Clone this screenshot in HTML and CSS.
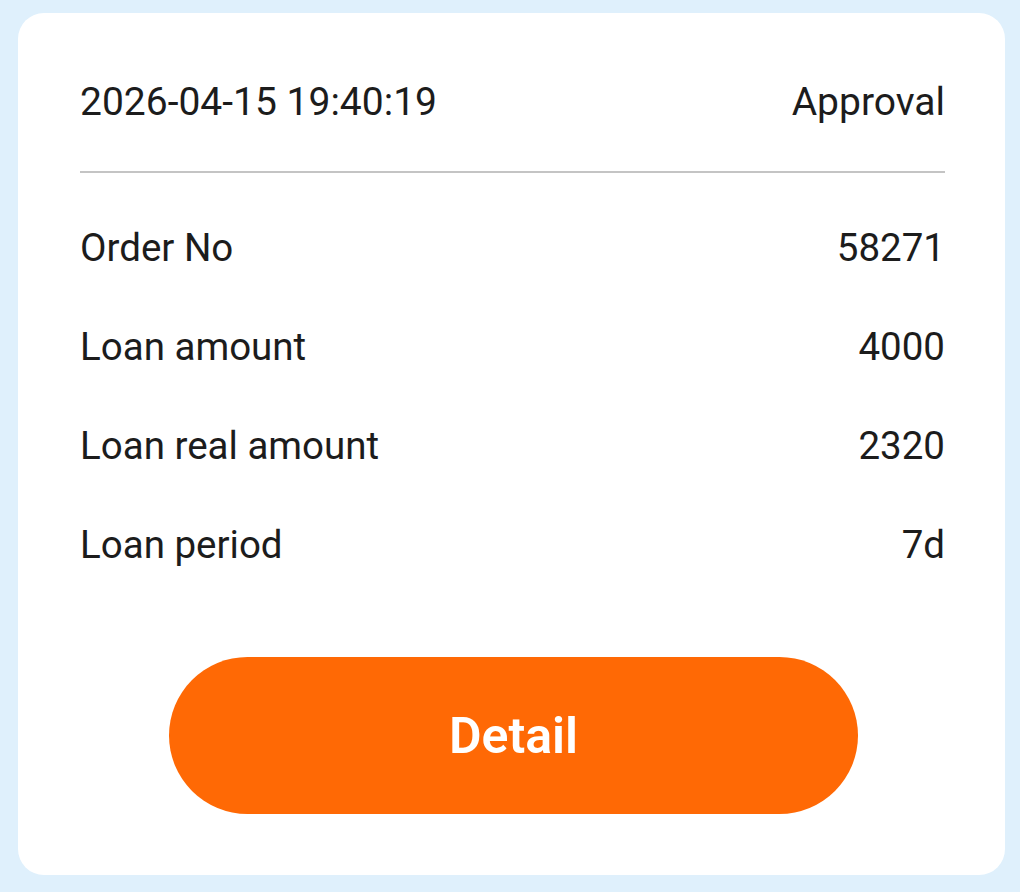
FILE: index.html
```html
<!DOCTYPE html>
<html lang="en">
<head>
<meta charset="utf-8">
<title>Order</title>
<link rel="stylesheet" href="styles.css">
</head>
<body>
<div class="card">
  <div class="header">
    <span class="date">2026-04-15 19:40:19</span>
    <span class="status">Approval</span>
  </div>
  <div class="divider"></div>
  <div class="rows">
    <div class="row"><span>Order No</span><span>58271</span></div>
    <div class="row"><span>Loan amount</span><span>4000</span></div>
    <div class="row"><span>Loan real amount</span><span>2320</span></div>
    <div class="row"><span>Loan period</span><span>7d</span></div>
  </div>
  <div class="actions">
    <button class="detail-btn">Detail</button>
  </div>
</div>
</body>
</html>
```

FILE: styles.css
```css
html, body {
  margin: 0;
  padding: 0;
}
body {
  background: #dff0fc;
  width: 1020px;
  height: 892px;
  overflow: hidden;
  font-family: Roboto, "Noto Sans", Arial, sans-serif;
  color: #1c1c1c;
}
.card {
  box-sizing: border-box;
  margin: 13px 0 0 18px;
  width: 987px;
  height: 862px;
  background: #ffffff;
  border-radius: 26px;
  padding: 66px 60px 0 62px;
}
.header {
  display: flex;
  justify-content: space-between;
  font-size: 39px;
  line-height: 46px;
}
.divider {
  margin-top: 46px;
  height: 2px;
  background: #c4c4c4;
}
.rows {
  margin-top: 25px;
}
.row {
  display: flex;
  justify-content: space-between;
  font-size: 38.5px;
  height: 99px;
  line-height: 99px;
}
.actions {
  display: flex;
  justify-content: center;
  margin-top: 63px;
  padding-left: 2px;
}
.detail-btn {
  width: 689px;
  height: 157px;
  border: none;
  border-radius: 79px;
  background: #ff6905;
  color: #ffffff;
  font-family: Roboto, "Noto Sans", Arial, sans-serif;
  font-size: 50px;
  font-weight: 600;
  padding: 0;
}
```
